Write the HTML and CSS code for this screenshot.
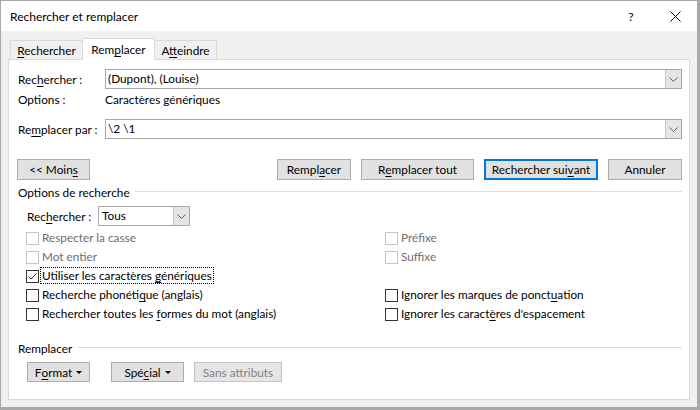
FILE: index.html
```html
<!DOCTYPE html>
<html lang="fr">
<head>
<meta charset="utf-8">
<title>Rechercher et remplacer</title>
<link rel="stylesheet" href="styles.css">
</head>
<body>
<div class="window">
  <div class="titlebar">
    <span class="title">Rechercher et remplacer</span>
    <span class="help">?</span>
    <span class="close"><svg width="11" height="11" viewBox="0 0 11 11"><path d="M0.5 0.5 L10.5 10.5 M10.5 0.5 L0.5 10.5" stroke="#000" stroke-width="1" fill="none"/></svg></span>
  </div>
  <div class="body">
    <div class="tabs">
      <div class="tab tab-first"><u>R</u>echercher</div>
      <div class="tab active">Rem<u>p</u>lacer</div>
      <div class="tab tab-last">A<u>t</u>teindre</div>
    </div>
    <div class="panel">
      <div class="field">
        <span class="label">Rec<u>h</u>ercher :</span>
        <div class="combo"><span class="value">(Dupont), (Louise)</span><span class="dd"><svg width="9" height="5" viewBox="0 0 9 5"><polyline points="0.5,0.5 4.5,4.5 8.5,0.5" fill="none" stroke="#606060" stroke-width="1"/></svg></span></div>
      </div>
      <div class="field">
        <span class="label">Options :</span>
        <span class="value-plain">Caractères génériques</span>
      </div>
      <div class="field field-gap">
        <span class="label">Re<u>m</u>placer par :</span>
        <div class="combo"><span class="value">\2 \1</span><span class="dd"><svg width="9" height="5" viewBox="0 0 9 5"><polyline points="0.5,0.5 4.5,4.5 8.5,0.5" fill="none" stroke="#606060" stroke-width="1"/></svg></span></div>
      </div>
      <div class="button-row">
        <button class="btn btn-moins">&lt;&lt; Moin<u>s</u></button>
        <div class="btn-group">
          <button class="btn w74">Rempl<u>a</u>cer</button>
          <button class="btn w113">R<u>e</u>mplacer tout</button>
          <button class="btn w114 default">Rechercher sui<u>v</u>ant</button>
          <button class="btn w74">Annuler</button>
        </div>
      </div>
      <div class="section-head">Options de recherche</div>
      <div class="sub-field">
        <span class="sub-label">Rec<u>h</u>ercher :</span>
        <div class="combo combo-small"><span class="value">Tous</span><span class="dd"><svg width="9" height="5" viewBox="0 0 9 5"><polyline points="0.5,0.5 4.5,4.5 8.5,0.5" fill="none" stroke="#606060" stroke-width="1"/></svg></span></div>
      </div>
      <div class="checks">
        <div class="check disabled"><span class="box"></span><span>Respecter la casse</span></div>
        <div class="check disabled"><span class="box"></span><span>Préfixe</span></div>
        <div class="check disabled"><span class="box"></span><span>Mot entier</span></div>
        <div class="check disabled"><span class="box"></span><span>Suffixe</span></div>
        <div class="check"><span class="box"><svg width="11" height="11" viewBox="0 0 11 11"><polyline points="1.5,5.5 4,8 9.5,2.5" fill="none" stroke="#333" stroke-width="1"/></svg></span><span class="focus">Utiliser les caractères <u>g</u>énériques</span></div>
        <div class="check empty"></div>
        <div class="check"><span class="box"></span><span>Recherche phonéti<u>q</u>ue (anglais)</span></div>
        <div class="check"><span class="box"></span><span>Ignorer les marques de ponct<u>u</u>ation</span></div>
        <div class="check"><span class="box"></span><span>Rechercher toutes les <u>f</u>ormes du mot (anglais)</span></div>
        <div class="check"><span class="box"></span><span>Ignorer les caract<u>è</u>res d'espacement</span></div>
      </div>
      <div class="section-head section-replace">Remplacer</div>
      <div class="bottom-row">
        <button class="btn w63">F<u>o</u>rmat<span class="caret"></span></button>
        <button class="btn w73 ml21">Spé<u>c</u>ial<span class="caret"></span></button>
        <button class="btn w88 ml10 btn-disabled">Sans attributs</button>
      </div>
    </div>
  </div>
</div>
</body>
</html>
```
FILE: styles.css
```css
* { box-sizing: border-box; }
html, body { margin: 0; padding: 0; }
body {
  width: 700px;
  height: 410px;
  overflow: hidden;
  font-family: Lato, "Liberation Sans", sans-serif;
  font-size: 11.8px;
  color: #000;
  background: #fff;
}
u { text-decoration: underline; text-underline-offset: 2px; }

.window {
  width: 700px;
  height: 410px;
  border-style: solid;
  border-color: #a8a8a8;
  border-width: 1px 3px 3px 1px;
  display: flex;
  flex-direction: column;
}

.titlebar {
  height: 30px;
  flex-shrink: 0;
  background: #fff;
  display: flex;
  align-items: center;
  padding: 0 12px 0 9px;
}
.title { flex: 1; font-size: 12px; }
.help { width: 20px; text-align: center; font-size: 12px; margin-right: 24px; }
.close { width: 20px; height: 20px; display: flex; align-items: center; justify-content: center; }

.body {
  flex: 1;
  background: #f0f0f0;
  padding: 7px;
  display: flex;
  flex-direction: column;
}

.tabs {
  height: 21px;
  display: flex;
  align-items: flex-end;
  padding-left: 2px;
}
.tab {
  height: 19px;
  border: 1px solid #d9d9d9;
  border-bottom: none;
  background: #f0f0f0;
  text-align: center;
  line-height: 18px;
  padding-top: 1px;
}
.tab-first { width: 72px; border-right: none; }
.tab-last { width: 62px; border-left: none; }
.tab.active {
  width: 73px;
  height: 22px;
  margin-bottom: -1px;
  background: #fff;
  position: relative;
  z-index: 1;
  line-height: 20px;
}

.panel {
  flex: 1;
  background: #fff;
  border: 1px solid #d9d9d9;
  padding: 9px 7px 0 8px;
  display: flex;
  flex-direction: column;
}

.field { display: flex; align-items: center; height: 20px; }
.field-gap { margin-top: 10px; }
.label { width: 88px; padding-left: 1px; }
.value-plain { padding-left: 0; }

.combo {
  flex: 1;
  height: 20px;
  border: 1px solid #a9a9a9;
  display: flex;
  align-items: stretch;
  background: #fff;
}
.combo .value { flex: 1; padding-left: 2px; line-height: 18px; }
.dd {
  width: 16px;
  background: #e5e5e5;
  border-left: 1px solid #c6c6c6;
  display: flex;
  align-items: center;
  justify-content: center;
}
.combo-small { flex: none; width: 92px; }
.combo-small .value { padding-left: 3px; }

.button-row {
  margin-top: 20px;
  display: flex;
  justify-content: space-between;
}
.btn-group { display: flex; gap: 10px; }

.btn {
  height: 21px;
  background: #e1e1e1;
  border: 1px solid #adadad;
  font-family: inherit;
  font-size: 11.8px;
  color: #000;
  padding: 0;
  margin: 0;
  display: flex;
  align-items: center;
  justify-content: center;
}
.btn-moins { width: 73px; }
.w74 { width: 74px; }
.w113 { width: 113px; }
.w114 { width: 114px; }
.w63 { width: 63px; }
.w73 { width: 73px; }
.w88 { width: 88px; }
.ml21 { margin-left: 21px; }
.ml10 { margin-left: 10px; }
.btn.default { border: 2px solid #0078d7; }
.btn-disabled { color: #838383; border-color: #c4c4c4; background: #e5e5e5; }
.caret {
  display: inline-block;
  width: 0;
  height: 0;
  border-left: 3px solid transparent;
  border-right: 3px solid transparent;
  border-top: 3px solid #000;
  margin-left: 4px;
}

.section-head {
  margin-top: 4px;
  height: 16px;
  display: flex;
  align-items: center;
  padding-left: 1px;
}
.section-head::after {
  content: "";
  flex: 1;
  height: 1px;
  background: #dcdcdc;
  margin-left: 5px;
  margin-top: -1px;
}
.section-replace { margin-top: 17px; }
.section-replace::after { margin-left: 6px; }

.sub-field {
  margin-top: 6px;
  padding-left: 9px;
  display: flex;
  align-items: center;
  height: 20px;
}
.sub-label { width: 72px; padding-left: 1px; }

.checks {
  margin-top: 2px;
  padding-left: 9px;
  display: grid;
  grid-template-columns: 359px 1fr;
  grid-auto-rows: 19px;
}
.check { display: flex; align-items: center; gap: 3px; }
.box {
  width: 13px;
  height: 13px;
  border: 1px solid #333;
  background: #fff;
  display: flex;
  align-items: center;
  justify-content: center;
  flex-shrink: 0;
  margin-top: 1px;
}
.check.disabled { color: #6d6d6d; }
.check.disabled .box { border-color: #c4c4c4; }
.focus { outline: 1px dotted #000; outline-offset: 0; padding: 0 1px; margin-left: -1px; }

.bottom-row {
  margin-top: 6px;
  padding-left: 10px;
  display: flex;
}
.bottom-row .btn { height: 20px; }
```
